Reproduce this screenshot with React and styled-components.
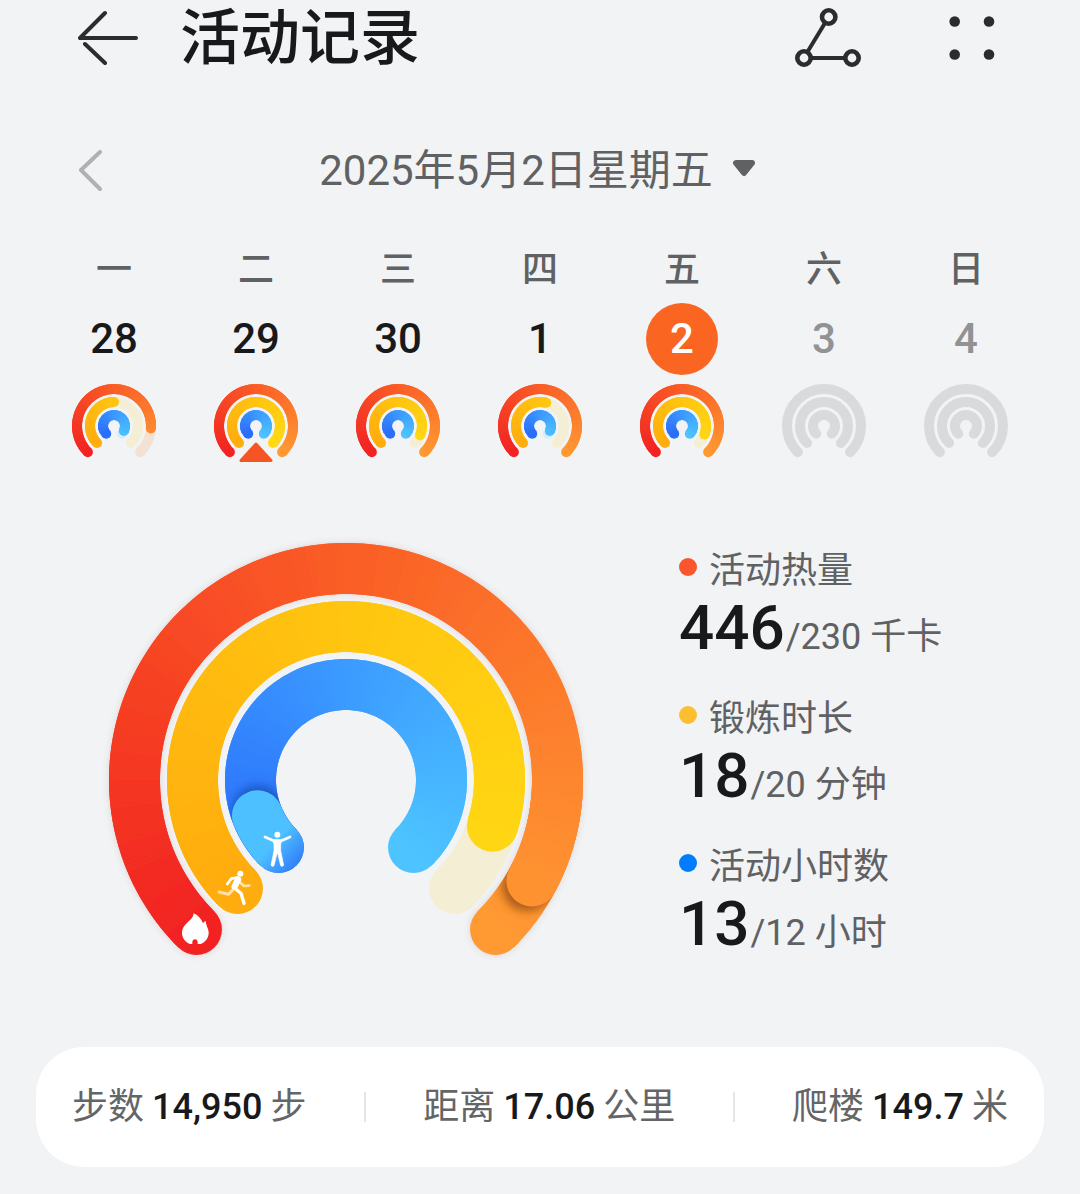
import React from 'react';
import styled, { createGlobalStyle } from 'styled-components';

const GlobalStyle = createGlobalStyle`
  body {
    margin: 0;
    background: #f1f3f5;
  }

  * {
    box-sizing: border-box;
  }

  button {
    padding: 0;
    border: 0;
    background: none;
    font: inherit;
    color: inherit;
    cursor: pointer;
  }

  svg {
    display: block;
  }
`;

const Page = styled.div`
  padding-bottom: 27px;
  font-family: Roboto, 'Noto Sans CJK SC', sans-serif;
  color: #18191a;
`;

const Header = styled.header`
  display: flex;
  align-items: center;
  height: 76px;
  padding: 0 85px 0 78px;
`;

const Title = styled.h1`
  flex: 1;
  margin: 0 0 0 40px;
  padding-top: 2px;
  font-size: 60px;
  font-weight: 500;
  line-height: 76px;
`;

const MenuButton = styled.button`
  margin-left: 88px;
`;

const DateBar = styled.div`
  display: grid;
  grid-template-columns: 1fr auto 1fr;
  align-items: center;
  height: 60px;
  margin-top: 65px;
  padding: 0 84px 0 78px;
`;

const DateButton = styled.button`
  display: flex;
  align-items: center;
  gap: 20px;
  color: #606163;
  font-size: 42px;
  line-height: 60px;
`;

const Week = styled.div`
  display: grid;
  grid-template-columns: repeat(7, 1fr);
  margin-top: 41px;
  padding: 0 43px;
`;

const Day = styled.button`
  display: flex;
  flex-direction: column;
  align-items: center;
`;

const Weekday = styled.span`
  color: #606163;
  font-family: 'Noto Sans CJK SC', sans-serif;
  font-size: 36px;
  font-weight: 500;
  line-height: 48px;
`;

const DayNumber = styled.span`
  width: 72px;
  height: 72px;
  margin: 13px 0 9px;
  border-radius: 50%;
  font-size: 42px;
  font-weight: 500;
  line-height: 72px;
  text-align: center;
  background: ${props => (props.$selected ? '#fb6522' : 'transparent')};
  color: ${props => {
    if (props.$selected) return '#fff';
    return props.$future ? '#919294' : '#18191a';
  }};
`;

const Main = styled.main`
  display: flex;
  align-items: flex-start;
  gap: 87px;
  margin-top: 66px;
  padding-left: 100px;
`;

const Legend = styled.div`
  display: flex;
  flex-direction: column;
  gap: 21px;
  padding-top: 11px;
`;

const Label = styled.div`
  display: flex;
  align-items: center;
  gap: 12px;
  color: #606163;
  font-family: 'Noto Sans CJK SC', sans-serif;
  font-size: 36px;
  line-height: 44px;
`;

const Dot = styled.span`
  width: 18px;
  height: 18px;
  border-radius: 50%;
  background: ${props => props.$color};
`;

const Value = styled.div`
  margin-top: 13px;
  color: #606163;
  font-size: 36px;
  line-height: 70px;
  white-space: nowrap;
`;

const Current = styled.strong`
  margin-right: 1px;
  font-size: 62px;
  font-weight: 500;
  line-height: 44px;
  color: #18191a;
`;

const Card = styled.footer`
  display: flex;
  align-items: center;
  justify-content: space-between;
  height: 120px;
  margin: 79px 36px 0;
  padding: 0 36px;
  border-radius: 48px;
  background: #fff;
`;

const Total = styled.span`
  display: flex;
  gap: 8px;
  color: #646566;
  font-size: 36px;
  line-height: 52px;
  white-space: nowrap;
`;

const Amount = styled.strong`
  font-weight: 500;
  color: #18191a;
`;

const Divider = styled.span`
  width: 2px;
  height: 30px;
  background: #e5e5e5;
`;

// Angles are in degrees, clockwise from three o'clock.
const START = 135;
const END = 405;

const COLORS = {
  heat: [[242, 35, 34], [250, 94, 38], [255, 154, 51]],
  exercise: [[255, 172, 14], [255, 197, 16], [255, 218, 20]],
  hours: [[43, 110, 250], [60, 155, 255], [77, 195, 255]],
};

const TRACKS = { heat: '#f3e1d4', exercise: '#f4efd4', hours: '#d5edfb' };

function point(r, angle) {
  const a = (angle * Math.PI) / 180;
  return [(r * Math.cos(a)).toFixed(2), (r * Math.sin(a)).toFixed(2)];
}

function arc(r, from, to) {
  const large = to - from > 180 ? 1 : 0;
  return `M${point(r, from)}A${r} ${r} 0 ${large} 1 ${point(r, to)}`;
}

function colorAt(stops, angle) {
  const t = ((angle - START) / (END - START)) * 2;
  const i = t < 1 ? 0 : 1;
  const mixed = stops[i].map((c, n) => Math.round(c + (stops[i + 1][n] - c) * (t - i)));
  return `rgb(${mixed.join(',')})`;
}

// Short overlapping strokes, each a shade further along the sweep.
function Sweep({ r, width, kind, from, to, step }) {
  const parts = [];
  for (let a = from; a < to; a += step) {
    parts.push(
      <path
        key={a}
        d={arc(r, a, Math.min(a + step * 2, to))}
        stroke={colorAt(COLORS[kind], a)}
        strokeWidth={width}
        fill="none"
      />
    );
  }
  return parts;
}

function Ring({ r, width, kind, end = END, step = 1 }) {
  const [sx, sy] = point(r, START);
  const [ex, ey] = point(r, end);
  return (
    <g>
      {end < END && (
        <path
          d={arc(r, START, END)}
          stroke={TRACKS[kind]}
          strokeWidth={width}
          strokeLinecap="round"
          fill="none"
        />
      )}
      <circle cx={sx} cy={sy} r={width / 2} fill={colorAt(COLORS[kind], START)} />
      <circle cx={ex} cy={ey} r={width / 2} fill={colorAt(COLORS[kind], end)} />
      <Sweep r={r} width={width} kind={kind} from={START} to={end} step={step} />
    </g>
  );
}

function MiniRings({ ends, marked }) {
  return (
    <svg width="84" height="84" viewBox="-42 -42 84 84" aria-hidden="true">
      {ends ? (
        <>
          <Ring r={37} width={10} kind="heat" end={ends[0]} step={6} />
          <Ring r={24} width={10} kind="exercise" end={ends[1]} step={9} />
          <Ring r={11} width={10} kind="hours" end={ends[2]} step={18} />
        </>
      ) : (
        [37, 24, 11].map(r => (
          <path
            key={r}
            d={arc(r, START, END)}
            stroke="#d9dadc"
            strokeWidth="10"
            strokeLinecap="round"
            fill="none"
          />
        ))
      )}
      {marked && (
        <path
          d="M0 18L15 34.5H-15Z"
          fill="#f55424"
          stroke="#f55424"
          strokeWidth="3"
          strokeLinejoin="round"
        />
      )}
    </svg>
  );
}

function BigRings() {
  return (
    <svg width="492" height="430" viewBox="-246 -246 492 430" role="img" aria-label="活动三环">
      <defs>
        <filter id="soft" x="-20%" y="-20%" width="140%" height="140%">
          <feDropShadow dx="0" dy="0" stdDeviation="3" floodColor="#8a5a4a" floodOpacity="0.2" />
        </filter>
        <filter id="capShadow" x="-50%" y="-50%" width="200%" height="200%">
          <feGaussianBlur stdDeviation="5" />
        </filter>
        <linearGradient id="lap" gradientUnits="userSpaceOnUse" x1="-70" y1="60" x2="-46" y2="82">
          <stop offset="0" stopColor="#4dc1ff" />
          <stop offset="1" stopColor="#3380fa" />
        </linearGradient>
        <mask id="heatMask" maskUnits="userSpaceOnUse" x="-246" y="-246" width="492" height="430">
          <path d={arc(211.5, START, END)} stroke="#fff" strokeWidth="51" strokeLinecap="round" fill="none" />
        </mask>
        <mask id="hoursMask" maskUnits="userSpaceOnUse" x="-246" y="-246" width="492" height="430">
          <path d={arc(95.5, START, END)} stroke="#fff" strokeWidth="51" strokeLinecap="round" fill="none" />
        </mask>
      </defs>

      <g filter="url(#soft)">
        <Ring r={211.5} width={51} kind="heat" />
      </g>
      <g mask="url(#heatMask)">
        <circle cx="181" cy="106" r="25" fill="#7a3c08" opacity="0.65" filter="url(#capShadow)" />
      </g>
      <circle cx="185.9" cy="100.9" r="25.5" fill={colorAt(COLORS.heat, 388)} />
      <Sweep r={211.5} width={51} kind="heat" from={363} to={388.5} step={1} />

      <Ring r={153.5} width={51} kind="exercise" end={377.5} />

      <Ring r={95.5} width={51} kind="hours" />
      <g mask="url(#hoursMask)">
        <circle cx="-88" cy="31" r="25" fill="#0b3f9c" opacity="0.65" filter="url(#capShadow)" />
        <path
          d={arc(95.5, START, 158)}
          stroke="url(#lap)"
          strokeWidth="51"
          strokeLinecap="round"
          fill="none"
        />
      </g>

      <g
        transform="translate(-176 0) scale(0.3333)"
        fill="none"
        stroke="#fff"
        strokeLinecap="round"
        strokeLinejoin="round"
      >
        <path
          d="M70 400C72 412 60 420 50 430C42 438 36 446 36 458C36 474 46 486 60 492L67 492C66 484 69 478 75 478C81 478 84 484 83 492L92 492C106 486 116 474 116 458C116 446 108 438 107 423C104 424 101 427 99 430C94 416 84 405 70 400Z"
          fill="#fff"
          stroke="none"
        />

        <g opacity="0.65" strokeWidth="8">
          <path d="M209 306L222 318L238 317" />
          <path d="M190 328L176 343L147 336" strokeWidth="9" />
        </g>
        <circle cx="211" cy="281" r="9" fill="#fff" stroke="none" />
        <path d="M202 293L184 296L172 312" strokeWidth="8" />
        <path d="M204 299L194 319" strokeWidth="19" />
        <path d="M194 324L213 340L222 370" strokeWidth="10" />

        <circle cx="322" cy="164" r="9" fill="#fff" stroke="none" />
        <path d="M285 171L311 182H334L360 171" strokeWidth="8" />
        <path d="M309 180H335L332 194V212L341 256Q337 262 332 257L323 220H321L312 257Q307 262 303 256L312 212V194Z" fill="#fff" strokeWidth="2" />
      </g>
    </svg>
  );
}

const days = [
  { weekday: '一', number: 28, ends: [364, 270, 387] },
  { weekday: '二', number: 29, ends: [405, 405, 405], marked: true },
  { weekday: '三', number: 30, ends: [405, 383, 405] },
  { weekday: '四', number: 1, ends: [405, 285, 387] },
  { weekday: '五', number: 2, ends: [405, 381, 405], selected: true },
  { weekday: '六', number: 3 },
  { weekday: '日', number: 4 },
];

const goals = [
  { label: '活动热量', current: 446, target: '/230 千卡', color: '#fa552d' },
  { label: '锻炼时长', current: 18, target: '/20 分钟', color: '#fdbf32' },
  { label: '活动小时数', current: 13, target: '/12 小时', color: '#007dff' },
];

const totals = [
  { label: '步数', amount: '14,950', unit: '步' },
  { label: '距离', amount: '17.06', unit: '公里' },
  { label: '爬楼', amount: '149.7', unit: '米' },
];

function App() {
  return (
    <Page>
      <GlobalStyle />
      <Header>
        <button aria-label="返回">
          <svg width="62" height="56" viewBox="0 0 62 56" fill="none" stroke="#2b2c2e" strokeWidth="4" strokeLinecap="round">
            <path d="M27 3L2 28H58M7 34L27 53" strokeLinejoin="round" />
          </svg>
        </button>
        <Title>活动记录</Title>
        <button aria-label="分享">
          <svg width="66" height="60" viewBox="0 0 66 60" fill="none" stroke="#2b2c2e" strokeWidth="4">
            <path d="M30 15L13 43M16 50H50" />
            <circle cx="33.7" cy="9" r="6.7" strokeWidth="4.6" />
            <circle cx="9" cy="50" r="6.7" strokeWidth="4.6" />
            <circle cx="57" cy="50" r="6.7" strokeWidth="4.6" />
          </svg>
        </button>
        <MenuButton aria-label="更多">
          <svg width="46" height="44" viewBox="0 0 46 44" fill="#2b2c2e">
            <circle cx="5.7" cy="5.5" r="5.3" />
            <circle cx="40" cy="5.5" r="5.3" />
            <circle cx="5.7" cy="38.5" r="5.3" />
            <circle cx="40" cy="38.5" r="5.3" />
          </svg>
        </MenuButton>
      </Header>

      <DateBar>
        <button aria-label="前一天">
          <svg width="26" height="42" viewBox="0 0 26 42" fill="none" stroke="#b0b1b3" strokeWidth="4" strokeLinecap="round" strokeLinejoin="round">
            <path d="M22 2L3 20L22 39" />
          </svg>
        </button>
        <DateButton>
          2025年5月2日星期五
          <svg width="22" height="24" viewBox="0 0 22 24" fill="#606163" stroke="#606163" strokeWidth="6" strokeLinejoin="round">
            <path d="M3 4H19L11 14Z" />
          </svg>
        </DateButton>
      </DateBar>

      <Week>
        {days.map(day => (
          <Day key={day.number}>
            <Weekday>{day.weekday}</Weekday>
            <DayNumber $selected={day.selected} $future={!day.ends}>
              {day.number}
            </DayNumber>
            <MiniRings ends={day.ends} marked={day.marked} />
          </Day>
        ))}
      </Week>

      <Main>
        <BigRings />
        <Legend>
          {goals.map(goal => (
            <div key={goal.label}>
              <Label>
                <Dot $color={goal.color} />
                {goal.label}
              </Label>
              <Value>
                <Current>{goal.current}</Current>
                {goal.target}
              </Value>
            </div>
          ))}
        </Legend>
      </Main>

      <Card>
        {totals.map((total, i) => (
          <React.Fragment key={total.label}>
            {i > 0 && <Divider />}
            <Total>
              {total.label}
              <Amount>{total.amount}</Amount>
              {total.unit}
            </Total>
          </React.Fragment>
        ))}
      </Card>
    </Page>
  );
}

export default App;
